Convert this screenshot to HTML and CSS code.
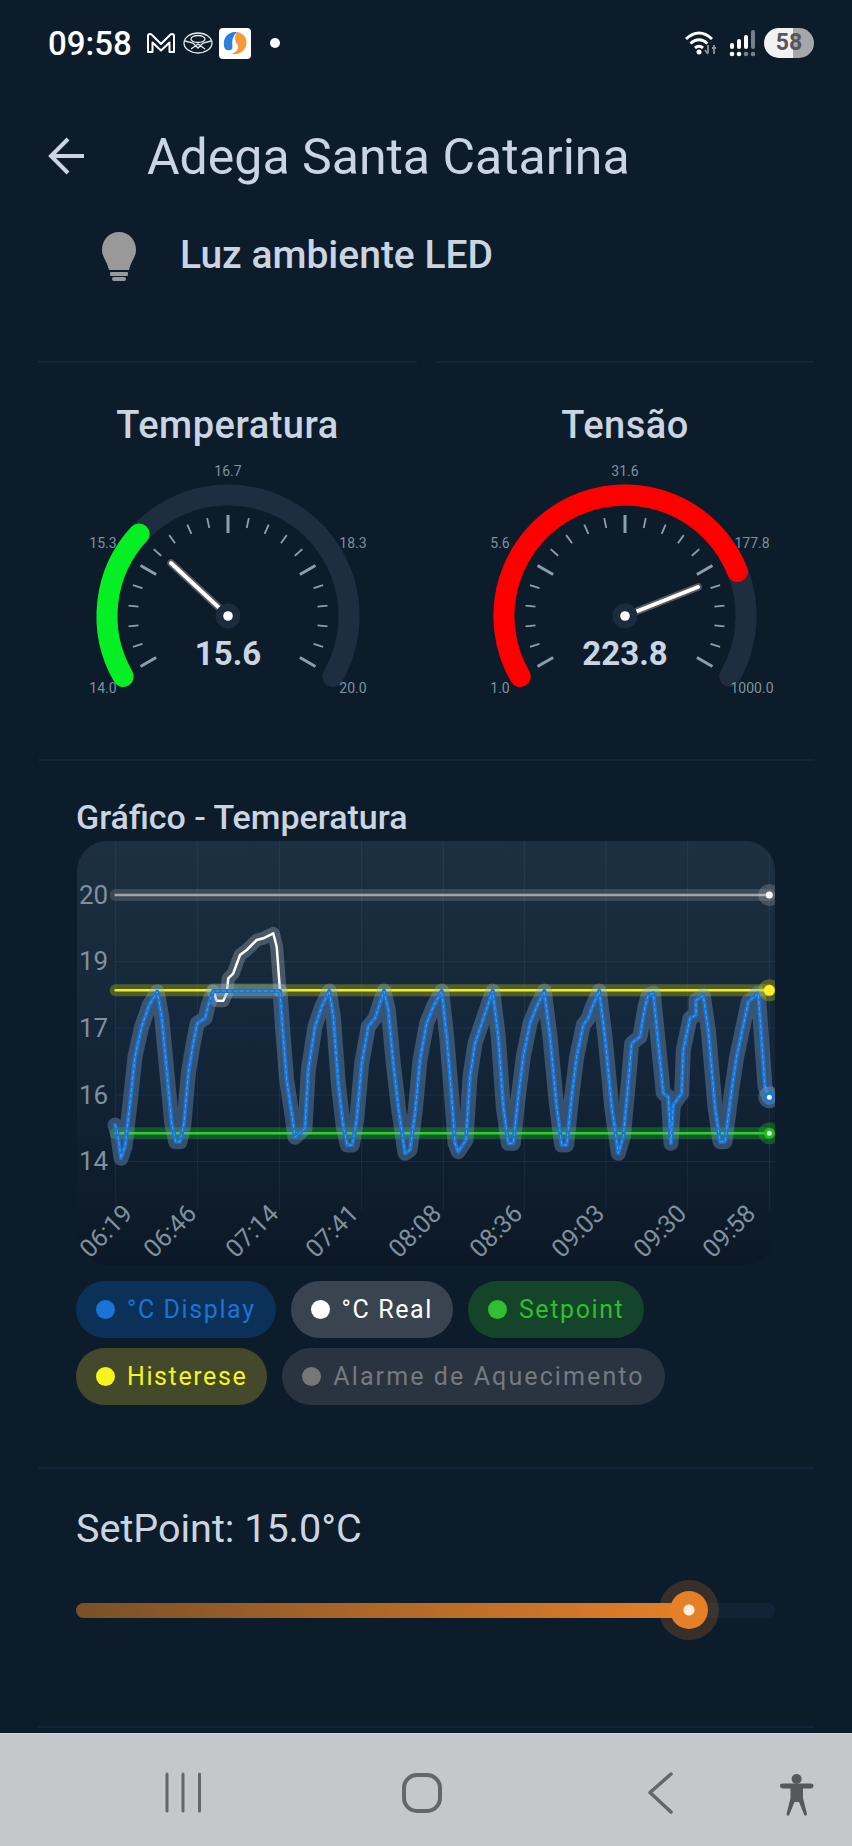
FILE: index.html
```html
<!DOCTYPE html>
<html>
<head>
    <title>Adega Santa Catarina</title>
    <link rel="stylesheet" href="styles.css">
</head>
<body>
    <!-- Status bar -->
    <div class="status-bar">
        <span class="clock">09:58</span>
        <svg class="st-mail" viewBox="0 0 28 20"><path d="M1 19V3Q1 1 3 1Q4.500 1 5.500 2.500L14 11L22.500 2.500Q23.500 1 25 1Q27 1 27 3V19H22.500V9.500L14 17.500L5.500 9.500V19Z"/></svg>
        <svg class="st-disc" viewBox="0 0 30 22"><ellipse cx="15" cy="11" rx="14" ry="10"/><ellipse cx="15" cy="7" rx="7" ry="3.500"/><path d="M2 9L10 11L15 16L20 11L28 9M8 17L15 12L22 17"/></svg>
        <svg class="st-app" viewBox="0 0 32 31"><rect width="32" height="31" rx="4" fill="#fff"/><path d="M18 4C9 3 4 10 5 17C5 22 9 23 12 22C15 20 12 14 14 10C15 7 17 5 18 4Z" fill="#2a7de1"/><path d="M18 4C25 5 29 11 27 18C25 24 19 27 13 26C16 24 20 22 19 18C17 14 14 11 18 4Z" fill="#f59a3a"/></svg>
        <span class="st-dot"></span>
        <span class="st-right">
            <svg class="st-wifi" viewBox="0 0 32 26"><path d="M2 9Q15 -3 28 9M6.500 13.500Q15 6 23.500 13.500M11 18Q15 14.500 19 18"/><circle cx="15" cy="22" r="2.500" fill="#fff" stroke="none"/><path class="dim" d="M24 15V23M21 20L24 24M30 15V24M28 18H32"/></svg>
            <svg class="st-signal" viewBox="0 0 26 27"><rect x="1" y="13" width="4" height="6" rx="2"/><rect x="8" y="9" width="4" height="10" rx="2"/><rect x="15" y="5" width="4" height="14" rx="2"/><rect class="dim" x="22" y="0" width="4" height="19" rx="2"/><circle cx="3" cy="24" r="2.300"/><circle cx="10" cy="24" r="2.300"/><circle class="dim" cx="17" cy="24" r="2.300"/><circle class="dim" cx="24" cy="24" r="2.300"/></svg>
            <span class="battery">58</span>
        </span>
    </div>

    <!-- Header -->
    <div class="app-header">
        <svg class="back-arrow" viewBox="0 0 38 38"><path d="M36 19H3M20 2L3 19L20 36"/></svg>
        <h1>Adega Santa Catarina</h1>
    </div>
    <div class="device-row">
        <svg class="bulb" viewBox="0 0 34 49"><path d="M17 0C27 0 34 8 34 18C34 25 29 29 27 38H7C5 29 0 25 0 18C0 8 7 0 17 0Z"/><rect x="8" y="40" width="18" height="4" rx="1"/><rect x="10" y="45" width="14" height="4" rx="2"/></svg>
        <span>Luz ambiente LED</span>
    </div>

    <div class="divider-row"><i></i><i></i></div>

    <!-- Gauges -->
    <div class="gauges">
        <div class="gauge">
            <h2>Temperatura</h2>
            <svg viewBox="-170 -156 340 250">
                <defs>
                    <g id="ticks">
                        <line class="major" x1="0" y1="-83" x2="0" y2="-101" transform="rotate(-120)"/>
                        <line x1="0" y1="-90" x2="0" y2="-100" transform="rotate(-108)"/>
                        <line x1="0" y1="-90" x2="0" y2="-100" transform="rotate(-96)"/>
                        <line x1="0" y1="-90" x2="0" y2="-100" transform="rotate(-84)"/>
                        <line x1="0" y1="-90" x2="0" y2="-100" transform="rotate(-72)"/>
                        <line class="major" x1="0" y1="-83" x2="0" y2="-101" transform="rotate(-60)"/>
                        <line x1="0" y1="-90" x2="0" y2="-100" transform="rotate(-48)"/>
                        <line x1="0" y1="-90" x2="0" y2="-100" transform="rotate(-36)"/>
                        <line x1="0" y1="-90" x2="0" y2="-100" transform="rotate(-24)"/>
                        <line x1="0" y1="-90" x2="0" y2="-100" transform="rotate(-12)"/>
                        <line class="major" x1="0" y1="-83" x2="0" y2="-101"/>
                        <line x1="0" y1="-90" x2="0" y2="-100" transform="rotate(12)"/>
                        <line x1="0" y1="-90" x2="0" y2="-100" transform="rotate(24)"/>
                        <line x1="0" y1="-90" x2="0" y2="-100" transform="rotate(36)"/>
                        <line x1="0" y1="-90" x2="0" y2="-100" transform="rotate(48)"/>
                        <line class="major" x1="0" y1="-83" x2="0" y2="-101" transform="rotate(60)"/>
                        <line x1="0" y1="-90" x2="0" y2="-100" transform="rotate(72)"/>
                        <line x1="0" y1="-90" x2="0" y2="-100" transform="rotate(84)"/>
                        <line x1="0" y1="-90" x2="0" y2="-100" transform="rotate(96)"/>
                        <line x1="0" y1="-90" x2="0" y2="-100" transform="rotate(108)"/>
                        <line class="major" x1="0" y1="-83" x2="0" y2="-101" transform="rotate(120)"/>
                    </g>
                </defs>
                <path class="g-track" d="M-104.800 60.500A121 121 0 1 1 104.800 60.500"/>
                <path class="g-value green" d="M-104.800 60.500A121 121 0 0 1 -88.900 -82.100"/>
                <use href="#ticks" class="ticks"/>
                <line class="needle-edge" x1="-8" y1="-7.400" x2="-57" y2="-53"/>
                <line class="needle" x1="-8" y1="-7.400" x2="-57" y2="-53"/>
                <circle class="hub" r="12.500"/>
                <circle class="hub-dot" r="4.800"/>
                <text class="g-label" x="0" y="-140">16.7</text>
                <text class="g-label" x="-125" y="-68">15.3</text>
                <text class="g-label" x="125" y="-68">18.3</text>
                <text class="g-label" x="-125" y="77">14.0</text>
                <text class="g-label" x="125" y="77">20.0</text>
                <text class="g-num" x="0" y="49">15.6</text>
            </svg>
        </div>
        <div class="gauge">
            <h2>Tensão</h2>
            <svg viewBox="-170 -156 340 250">
                <path class="g-track" d="M-104.800 60.500A121 121 0 1 1 104.800 60.500"/>
                <path class="g-value red" d="M-104.800 60.500A121 121 0 1 1 112.500 -44.500"/>
                <use href="#ticks" class="ticks"/>
                <line class="needle-edge" x1="10" y1="-4" x2="73" y2="-29"/>
                <line class="needle" x1="10" y1="-4" x2="73" y2="-29"/>
                <circle class="hub" r="12.500"/>
                <circle class="hub-dot" r="4.800"/>
                <text class="g-label" x="0" y="-140">31.6</text>
                <text class="g-label" x="-125" y="-68">5.6</text>
                <text class="g-label" x="127" y="-68">177.8</text>
                <text class="g-label" x="-125" y="77">1.0</text>
                <text class="g-label" x="127" y="77">1000.0</text>
                <text class="g-num" x="0" y="49">223.8</text>
            </svg>
        </div>
    </div>

    <div class="divider"></div>

    <!-- Chart -->
    <h3 class="chart-title">Gráfico - Temperatura</h3>
    <div class="chart-card">
        <svg viewBox="77 841 698 424">
            <g class="grid">
                <path d="M115.700 961.700H775M115.700 1028H775M115.700 1095H775M115.700 1161.700H775M115.700 895H775"/>
                <path d="M115.700 841V1210M197.300 841V1210M279.300 841V1210M361.700 841V1210M443.300 841V1210M524.300 841V1210M606 841V1210M687.700 841V1210M769.300 841V1210"/>
            </g>
            <g class="y-labels">
                <text x="79" y="904">20</text>
                <text x="79" y="970">19</text>
                <text x="79" y="1037">17</text>
                <text x="79" y="1104">16</text>
                <text x="79" y="1170">14</text>
            </g>
            <g class="x-labels">
                <text transform="translate(134 1215) rotate(-45)">06:19</text>
                <text transform="translate(198 1215) rotate(-45)">06:46</text>
                <text transform="translate(280 1215) rotate(-45)">07:14</text>
                <text transform="translate(360 1215) rotate(-45)">07:41</text>
                <text transform="translate(443 1215) rotate(-45)">08:08</text>
                <text transform="translate(524 1215) rotate(-45)">08:36</text>
                <text transform="translate(606 1215) rotate(-45)">09:03</text>
                <text transform="translate(688 1215) rotate(-45)">09:30</text>
                <text transform="translate(757 1215) rotate(-45)">09:58</text>
            </g>

            <path class="halo h-grey" d="M115.700 895H769.300"/>
            <path class="line l-grey" d="M115.700 895H769.300"/>
            <path class="halo h-yellow" d="M115.700 990.300H769.300"/>
            <path class="line l-yellow" d="M115.700 990.300H769.300"/>
            <path class="halo h-green" d="M115.700 1133.300H769.300"/>
            <path class="line l-green" d="M115.700 1133.300H769.300"/>

            <polyline class="halo h-white" points="213.300,991 216.700,1000.700 223.300,1000.700 226.700,993.300 228.300,978.300 233.300,973.300 240,955 246.700,950 256.700,940 263.300,938.300 273.300,933.300 276.700,946.700 280,991"/>
            <polyline class="line l-white" points="213.300,991 216.700,1000.700 223.300,1000.700 226.700,993.300 228.300,978.300 233.300,973.300 240,955 246.700,950 256.700,940 263.300,938.300 273.300,933.300 276.700,946.700 280,991"/>

            <defs>
                <polyline id="display" points="115,1125 117.300,1131.700 121,1158.300 125,1146.700 130,1103.300 135,1056.700 141.700,1026.700 149.300,1005 157.300,991.700 161.700,1016.700 166.700,1070 171.700,1123.300 175.700,1141.700 180,1141.700 184,1123.300 188.300,1073.300 193.300,1043.300 197.300,1023.300 205,1018.300 208.300,1005 213.300,991 280,991 282.700,1030 286.700,1080 291.700,1113.300 295,1137.300 305,1128.300 308.300,1070 315,1026.700 321.700,1006.700 329.300,991 333.300,1016.700 338.300,1083.300 343.300,1126.700 347.300,1145 352.300,1145 356.700,1120 361.700,1063.300 368.300,1026.700 375,1018.300 384,991 388.300,1010 393.300,1063.300 398.300,1106.700 405,1153.300 410,1150 415,1113.300 420,1060 426.700,1023.300 433.300,1006.700 441.700,991 446.700,1036.700 451.700,1096.700 455,1143.300 458.300,1151.700 466,1140 470,1076.700 475,1043.300 481.700,1023.300 492.700,991 498.300,1036.700 503.300,1106.700 508.300,1143.300 513.300,1143.300 518.300,1096.700 523.300,1056.700 530,1023.300 536.700,1006.700 544.300,991 550,1036.700 556.700,1106.700 561.700,1145 566.700,1145 571.700,1096.700 576.700,1056.700 583.300,1025 588.300,1018.300 591.700,1008.300 599.300,991 605,1036.700 611.700,1106.700 618.300,1153.300 623.300,1136.700 628.300,1083.300 631.700,1043.300 640,1036.700 645,1006.700 648.300,995 653.300,993.300 658.300,1043.300 663.300,1093.300 668.300,1096.700 671,1143.300 673.300,1105 681.700,1093.300 683.300,1050 690,1018.300 696,1015 696,1000 703.300,995.700 708.300,1030 715,1106.700 720,1141.700 725,1141.700 731.700,1090 736.700,1056.700 748.300,1001.700 758.300,993.300 765,1086.700 769.300,1097.300"/>
            </defs>
            <use href="#display" class="halo h-blue"/>
            <use href="#display" class="line l-blue"/>
            <use href="#display" class="l-blue-core"/>

            <circle class="end-halo h-grey-dot" cx="769.300" cy="895" r="11"/>
            <circle cx="769.300" cy="895" r="3.500" fill="#fff"/>
            <circle class="end-halo h-yellow-dot" cx="769.300" cy="990.300" r="11"/>
            <circle cx="769.300" cy="990.300" r="5.500" fill="#ffee22"/>
            <circle class="end-halo h-blue-dot" cx="769.300" cy="1097.300" r="11"/>
            <circle cx="769.300" cy="1097.300" r="5.500" fill="#1976e0"/>
            <circle cx="769.300" cy="1097.300" r="2.500" fill="#fff"/>
            <circle class="end-halo h-green-dot" cx="769.300" cy="1133.300" r="11"/>
            <circle cx="769.300" cy="1133.300" r="5.500" fill="#22bb22"/>
            <circle cx="769.300" cy="1133.300" r="2.500" fill="#d8ffd8"/>
        </svg>
    </div>

    <div class="legend">
        <span class="chip chip-blue"><i></i>°C Display</span>
        <span class="chip chip-white"><i></i>°C Real</span>
        <span class="chip chip-green"><i></i>Setpoint</span>
        <span class="chip chip-yellow"><i></i>Histerese</span>
        <span class="chip chip-off"><i></i>Alarme de Aquecimento</span>
    </div>

    <div class="divider divider-b"></div>

    <!-- Setpoint slider -->
    <div class="setpoint">
        <div class="setpoint-label">SetPoint: 15.0°C</div>
        <div class="slider">
            <div class="slider-fill"></div>
            <div class="slider-thumb"></div>
        </div>
    </div>

    <div class="divider divider-c"></div>

    <!-- Android nav bar -->
    <div class="nav-bar">
        <svg viewBox="0 0 852 113">
            <path class="nav-icon" d="M167 40V77M183 40V77M199.500 40V77"/>
            <rect class="nav-icon nav-home" x="404" y="41" width="36" height="36" rx="13"/>
            <path class="nav-icon nav-back" d="M671 40L650 58.500L671 78"/>
            <circle class="nav-fill" cx="796.600" cy="45" r="5"/>
            <path class="nav-fill" d="M780 51.500Q780 49.500 783 49.500H810.500Q813.500 49.500 813.500 51.500Q813.500 54.500 810.500 54.500H803L803 64L807 80Q807 82 804.500 81.500L799 68H794.500L789 81.500Q786.500 82 786.500 80L790.500 64L790.500 54.500H783Q780 54.500 780 51.500Z"/>
        </svg>
    </div>
</body>
</html>
```

FILE: styles.css
```css
body {
    margin: 0;
    width: 852px;
    height: 1846px;
    overflow: hidden;
    position: relative;
    background: #0d1c2b;
    color: #cbd5e1;
    font-family: Roboto, "Liberation Sans", sans-serif;
}

h1, h2, h3 {
    margin: 0;
    font-weight: 400;
}

/* Status bar */
.status-bar {
    height: 86px;
    display: flex;
    align-items: center;
    padding: 0 38px 0 48px;
    color: #fff;
}
.clock {
    font-size: 33px;
    font-weight: 500;
    width: 99px;
}
.st-mail {
    width: 28px;
    height: 20px;
    fill: none;
    stroke: #fff;
    stroke-width: 2;
    stroke-linejoin: round;
}
.st-disc {
    width: 30px;
    height: 22px;
    margin-left: 8px;
    fill: none;
    stroke: #e6e8ea;
    stroke-width: 1.300;
}
.st-app {
    width: 32px;
    height: 31px;
    margin-left: 6px;
}
.st-dot {
    width: 10px;
    height: 10px;
    margin-left: 19px;
    border-radius: 50%;
    background: #fff;
}
.st-right {
    margin-left: auto;
    display: flex;
    align-items: center;
}
.st-wifi {
    width: 32px;
    height: 26px;
    fill: none;
    stroke: #fff;
    stroke-width: 3;
}
.st-wifi .dim {
    stroke: #8b939b;
    stroke-width: 1.800;
}
.st-signal {
    width: 26px;
    height: 27px;
    margin-left: 13px;
    fill: #fff;
}
.st-signal .dim {
    fill: #77808a;
}
.battery {
    width: 50px;
    height: 30px;
    margin-left: 9px;
    border-radius: 15px;
    background: linear-gradient(90deg, #f2f2f2 58%, #a5a7ab 58%);
    color: #54575c;
    font-size: 23px;
    font-weight: 700;
    line-height: 30px;
    text-align: center;
}

/* Header */
.app-header {
    height: 56px;
    margin-top: 42px;
    padding-left: 48px;
    display: flex;
    align-items: center;
}
.back-arrow {
    width: 38px;
    height: 38px;
    fill: none;
    stroke: #cbd5e1;
    stroke-width: 4;
}
.app-header h1 {
    margin-left: 61px;
    padding-top: 2px;
    font-size: 50px;
}
.device-row {
    height: 56px;
    margin-top: 44px;
    padding-left: 102px;
    display: flex;
    align-items: center;
    font-size: 39px;
    font-weight: 500;
}
.device-row span {
    padding-bottom: 2px;
}
.bulb {
    width: 34px;
    height: 49px;
    margin-right: 44px;
    fill: #999;
}
.divider-row {
    margin: 77px 38px 0;
    display: grid;
    grid-template-columns: 379px 378px;
    justify-content: space-between;
}
.divider-row i {
    height: 2px;
    background: #12243a;
}
.divider {
    height: 2px;
    margin: 0 38px;
    background: #12243a;
}

/* Gauges */
.gauges {
    margin: 0 38px;
    height: 396px;
    display: grid;
    grid-template-columns: 379px 378px;
    justify-content: space-between;
}
.gauge {
    display: flex;
    flex-direction: column;
    align-items: center;
}
.gauge h2 {
    margin-top: 41px;
    font-size: 38px;
    font-weight: 500;
    line-height: 42px;
    letter-spacing: .5px;
}
.gauge svg {
    width: 340px;
    height: 250px;
    margin-top: 14px;
}
.g-track, .g-value {
    fill: none;
    stroke-width: 21;
    stroke-linecap: round;
}
.g-track { stroke: #1e2e40; }
.green { stroke: #06ee24; }
.red { stroke: #ff0000; }
.ticks {
    stroke: #8aa0ac;
    stroke-width: 1.800;
}
.major {
    stroke-width: 3;
}
.needle-edge {
    stroke: #55595f;
    stroke-width: 7.500;
    stroke-linecap: round;
}
.needle {
    stroke: #fff;
    stroke-width: 4;
    stroke-linecap: round;
}
.hub { fill: #1c2c3e; }
.hub-dot { fill: #fff; }
.g-label {
    fill: #7e919f;
    font-size: 14px;
    text-anchor: middle;
}
.g-num {
    fill: #cbd5e1;
    font-size: 33px;
    font-weight: 700;
    text-anchor: middle;
}

/* Chart */
.chart-title {
    margin: 36px 0 0 76px;
    font-size: 34px;
    font-weight: 500;
    line-height: 40px;
}
.chart-card {
    width: 698px;
    height: 424px;
    margin: 4px 0 0 77px;
    border-radius: 30px;
    overflow: hidden;
    background: linear-gradient(180deg, #1d3041 0%, #14273a 45%, #0c1826 100%);
}
.chart-card svg {
    display: block;
    width: 698px;
    height: 424px;
}
.grid path {
    fill: none;
    stroke: rgba(255, 255, 255, .06);
    stroke-width: 1;
}
.y-labels text {
    fill: #7f909e;
    font-size: 26px;
}
.x-labels text {
    fill: #7f909e;
    font-size: 25px;
    text-anchor: end;
}
.halo, .line, .l-blue-core {
    fill: none;
    stroke-linejoin: round;
    stroke-linecap: round;
}
.halo { stroke-width: 12; }
.line { stroke-width: 2.500; }
.h-grey { stroke: rgba(200, 200, 200, .18); }
.l-grey { stroke: #a5a5a5; }
.h-yellow { stroke: rgba(230, 230, 0, .28); }
.l-yellow { stroke: #f6f01a; }
.h-green { stroke: rgba(30, 210, 30, .3); }
.l-green { stroke: #33cc33; }
.h-white { stroke: rgba(200, 210, 220, .28); stroke-width: 13; }
.l-white { stroke: #fff; }
.h-blue { stroke: rgba(120, 165, 215, .36); stroke-width: 15; }
.l-blue { stroke: #1a74d6; stroke-width: 4; }
.l-blue-core {
    stroke: #4c9df0;
    stroke-width: 1;
    stroke-dasharray: 3 3;
}
.h-grey-dot { fill: rgba(210, 210, 210, .22); }
.h-yellow-dot { fill: rgba(230, 230, 0, .28); }
.h-blue-dot { fill: rgba(120, 165, 215, .36); }
.h-green-dot { fill: rgba(30, 210, 30, .3); }

/* Legend chips */
.legend {
    width: 620px;
    margin: 16px 0 0 76px;
    display: flex;
    flex-wrap: wrap;
    gap: 10px 15px;
}
.chip {
    height: 57px;
    padding: 0 20px;
    display: flex;
    align-items: center;
    border-radius: 29px;
    font-size: 25px;
    letter-spacing: 1.600px;
    box-sizing: border-box;
}
.chip i {
    width: 19px;
    height: 19px;
    margin-right: 12px;
    border-radius: 50%;
    background: currentColor;
}
.chip-blue { background: #0b3158; color: #1a73d8; }
.chip-white { background: #3a4450; color: #fff; }
.chip-green { background: #14442a; color: #2fbf2f; }
.chip-yellow { background: #43492a; color: #f5f51d; }
.chip-off { background: #2a3340; color: #737a80; letter-spacing: 2.100px; }
.chip-off i { background: #777; }

.divider-b { margin-top: 62px; }
.divider-c { margin-top: 0; }

/* Setpoint slider */
.setpoint {
    height: 257px;
    box-sizing: border-box;
    padding: 36px 77px 0 76px;
}
.setpoint-label {
    font-size: 39.500px;
    line-height: 48px;
}
.slider {
    position: relative;
    height: 15px;
    margin-top: 50px;
    border-radius: 8px;
    background: #112334;
}
.slider-fill {
    width: 613px;
    height: 15px;
    border-radius: 8px;
    background: linear-gradient(90deg, #7a5028, #e57f28);
}
.slider-thumb {
    position: absolute;
    left: 594px;
    top: -12px;
    width: 38px;
    height: 38px;
    border-radius: 50%;
    background: radial-gradient(circle, #fbeee0 0 5px, #e57f28 6px);
    box-shadow: 0 0 0 11px rgba(229, 127, 40, .2);
}

/* Nav bar */
.nav-bar {
    position: absolute;
    left: 0;
    right: 0;
    bottom: 0;
    height: 113px;
    background: #c6c7cb;
    border-top: 1px solid #d6d7da;
    box-sizing: border-box;
}
.nav-bar svg {
    display: block;
    width: 852px;
    height: 113px;
}
.nav-icon {
    fill: none;
    stroke: #63666b;
    stroke-width: 3;
    stroke-linecap: round;
    stroke-linejoin: round;
}
.nav-home { stroke-width: 4; }
.nav-back { stroke-width: 3.500; }
.nav-fill { fill: #55585d; }
```
